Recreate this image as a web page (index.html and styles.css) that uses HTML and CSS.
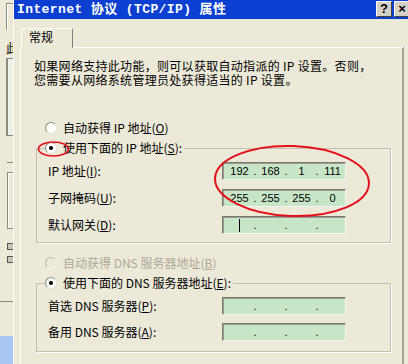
FILE: index.html
```html
<!DOCTYPE html>
<html lang="zh-CN">
<head>
    <meta charset="UTF-8">
    <meta name="viewport" content="width=device-width, initial-scale=1.0">
    <title>Internet 协议 (TCP/IP) 属性</title>
    <link rel="stylesheet" href="styles.css">
</head>
<body>
    <div class="screen">
        <div class="behind">
            <div class="bk-frame"></div>
            <div class="bk-char">此</div>
            <div class="bk-list"></div>
            <div class="bk-tick"></div>
            <div class="bk-box"></div>
            <div class="bk-check"></div>
            <div class="bk-check"></div>
            <div class="bk-rule"></div>
            <div class="bk-sel"></div>
        </div>

        <div class="dialog">
            <div class="titlebar">
                <span class="title">Internet 协议 (TCP/IP) 属性</span>
                <div class="tb-buttons">
                    <span class="tb-btn">?</span>
                    <span class="tb-btn">×</span>
                </div>
            </div>
            <div class="dlg-body">
                <div class="tabs">
                    <div class="tab">常规</div>
                </div>
                <div class="panel">
                    <p class="intro">如果网络支持此功能，则可以获取自动指派的 IP 设置。否则，<br>您需要从网络系统管理员处获得适当的 IP 设置。</p>

                    <div class="radio-row">
                        <span class="radio"></span>
                        <span>自动获得 IP 地址(<u>O</u>)</span>
                    </div>

                    <fieldset class="group">
                        <legend class="legend">
                            <span class="radio checked"></span>
                            <span>使用下面的 IP 地址(<u>S</u>):</span>
                        </legend>
                        <div class="rows">
                            <div class="row">
                                <span class="label">IP 地址(<u>I</u>):</span>
                                <div class="ip">
                                    <span class="seg">192</span><span class="dot">.</span><span class="seg">168</span><span class="dot">.</span><span class="seg">1</span><span class="dot">.</span><span class="seg">111</span>
                                </div>
                            </div>
                            <div class="row">
                                <span class="label">子网掩码(<u>U</u>):</span>
                                <div class="ip">
                                    <span class="seg">255</span><span class="dot">.</span><span class="seg">255</span><span class="dot">.</span><span class="seg">255</span><span class="dot">.</span><span class="seg">0</span>
                                </div>
                            </div>
                            <div class="row">
                                <span class="label">默认网关(<u>D</u>):</span>
                                <div class="ip">
                                    <span class="seg"><span class="caret"></span></span><span class="dot">.</span><span class="seg"></span><span class="dot">.</span><span class="seg"></span><span class="dot">.</span><span class="seg"></span>
                                </div>
                            </div>
                        </div>
                    </fieldset>

                    <div class="radio-row disabled">
                        <span class="radio"></span>
                        <span>自动获得 DNS 服务器地址(<u>B</u>)</span>
                    </div>

                    <fieldset class="group dns">
                        <legend class="legend">
                            <span class="radio checked"></span>
                            <span>使用下面的 DNS 服务器地址(<u>E</u>):</span>
                        </legend>
                        <div class="rows">
                            <div class="row">
                                <span class="label">首选 DNS 服务器(<u>P</u>):</span>
                                <div class="ip">
                                    <span class="seg"></span><span class="dot">.</span><span class="seg"></span><span class="dot">.</span><span class="seg"></span><span class="dot">.</span><span class="seg"></span>
                                </div>
                            </div>
                            <div class="row">
                                <span class="label">备用 DNS 服务器(<u>A</u>):</span>
                                <div class="ip">
                                    <span class="seg"></span><span class="dot">.</span><span class="seg"></span><span class="dot">.</span><span class="seg"></span><span class="dot">.</span><span class="seg"></span>
                                </div>
                            </div>
                        </div>
                    </fieldset>
                </div>
            </div>
        </div>

        <!-- red marks drawn over the screenshot -->
        <svg class="marks" width="408" height="364" viewBox="0 0 408 364">
            <ellipse cx="53.5" cy="149" rx="15" ry="7" fill="none" stroke="#e4101a" stroke-width="1.6"/>
            <ellipse cx="292" cy="181" rx="77" ry="35" fill="none" stroke="#e4101a" stroke-width="2" transform="rotate(2 292 181)"/>
        </svg>
    </div>
</body>
</html>
```

FILE: styles.css
```css
* {
    box-sizing: border-box;
}
html, body {
    margin: 0;
}
body {
    width: 408px;
    height: 364px;
    overflow: hidden;
    background: #ece9d8;
    font-family: "Noto Sans CJK SC", sans-serif;
    font-size: 12px;
    line-height: 14px;
    color: #000;
}
u {
    text-decoration: underline;
    text-underline-offset: 1px;
}
.screen {
    position: relative;
    display: flex;
    width: 408px;
    height: 364px;
    overflow: hidden;
}

/* window behind the dialog */
.behind {
    width: 13px;
    flex: none;
    overflow: hidden;
    display: flex;
    flex-direction: column;
}
.bk-frame {
    margin: 3px 0 0 6px;
    height: 27px;
    border-left: 1px solid #8d8b80;
    border-top: 1px solid #8d8b80;
    box-shadow: inset 1px 1px 0 #fff;
}
.bk-char {
    margin: 11px 0 0 6px;
    white-space: nowrap;
}
.bk-list {
    margin: 3px 0 0 6px;
    height: 78px;
    border: 1px solid #8d8b80;
    border-right: none;
    border-left-width: 2px;
    background: #eef2e6;
}
.bk-tick {
    margin: 26px 0 0 7px;
    height: 1px;
    background: #8d8b80;
}
.bk-box {
    margin: 9px 0 0 7px;
    height: 57px;
    border: 1px solid #8d8b80;
    border-right: none;
    box-shadow: inset 1px 1px 0 #fff;
}
.bk-check {
    margin: 14px 0 0 7px;
    width: 6px;
    height: 7px;
    border: 1px solid #555;
    border-right: none;
    background: #c9c6b8;
}
.bk-check + .bk-check {
    margin-top: 6px;
}
.bk-rule {
    margin-top: 38px;
    height: 1px;
    background: #8d8b80;
}
.bk-sel {
    margin-top: 34px;
    flex: 1;
    background: #a8c6f2;
}

/* dialog */
.dialog {
    flex: 1;
    min-width: 0;
    display: flex;
    flex-direction: column;
    border-left: 1px solid #fff;
}
.titlebar {
    height: 19px;
    flex: none;
    background: #0a3fd2;
    display: flex;
    justify-content: space-between;
    padding-left: 3px;
}
.title {
    color: #fff;
    font: bold 13px/19px "Liberation Mono", "Noto Sans CJK SC", monospace;
    letter-spacing: 0.4px;
    white-space: nowrap;
}
.tb-buttons {
    display: flex;
    gap: 2px;
    margin-right: -2px;
    padding-top: 1px;
}
.tb-btn {
    width: 16px;
    height: 16px;
    background: #d4d0c8;
    border: 1px solid;
    border-color: #fff #404040 #404040 #fff;
    font: bold 13px/14px "Liberation Sans", sans-serif;
    text-align: center;
    color: #000;
}
.dlg-body {
    flex: 1;
    display: flex;
    flex-direction: column;
    padding: 9px 4px 0 6px;
}
.tabs {
    display: flex;
}
.tab {
    position: relative;
    z-index: 1;
    margin: 0 0 -1px 1px;
    width: 52px;
    height: 20px;
    padding: 1px 0 0 7px;
    background: #ece9d8;
    border: 1px solid;
    border-color: #fff #808080 transparent #fff;
    border-bottom: none;
    border-radius: 2px 2px 0 0;
}
.panel {
    flex: 1;
    border-top: 1px solid #fff;
    border-left: 1px solid #fff;
    border-right: 2px solid #a5a397;
    padding: 11px 0 0 13px;
}
.intro {
    margin: 0;
    line-height: 14px;
    letter-spacing: 0.3px;
    white-space: nowrap;
}

/* radios */
.radio-row {
    display: flex;
    align-items: center;
    gap: 6px;
    height: 16px;
    margin: 33px 0 0 11px;
    white-space: nowrap;
}
.radio {
    flex: none;
    width: 12px;
    height: 12px;
    border-radius: 50%;
    border: 1px solid;
    border-color: #8c8a80 #e4e2d8 #e4e2d8 #8c8a80;
    background: #fff;
    display: flex;
    align-items: center;
    justify-content: center;
}
.radio.checked::after {
    content: "";
    width: 4px;
    height: 4px;
    border-radius: 50%;
    background: #000;
}
.disabled {
    color: #aca899;
    margin-top: 12px;
}
.disabled .radio {
    background: #ece9d8;
    border-color: #b8b6ab #f4f3ee #f4f3ee #b8b6ab;
}

/* group boxes */
.group {
    margin: 4px 0 0 2px;
    width: 355px;
    padding: 6px 0 8px 0;
    border: 1px solid #c2bfb0;
    box-shadow: 1px 1px 0 #fff;
}
.group.dns {
    padding-bottom: 10px;
}
.legend {
    display: flex;
    align-items: center;
    gap: 6px;
    height: 16px;
    margin-left: 8px;
    padding: 0 2px 0 0;
    white-space: nowrap;
}
.rows {
    display: flex;
    flex-direction: column;
    gap: 9px;
}
.dns .rows {
    gap: 8px;
}
.row {
    display: flex;
    align-items: center;
    padding-left: 11px;
    height: 18px;
}
.label {
    width: 174px;
    white-space: nowrap;
}

/* ip address fields */
.ip {
    display: flex;
    align-items: center;
    width: 124px;
    height: 18px;
    padding: 0 0 0 4px;
    background: #c7e6c7;
    border: 1px solid;
    border-color: #7a7a72 #f4f4f0 #f4f4f0 #7a7a72;
    box-shadow: inset 1px 1px 0 #9a9a92;
    font: 11px/16px "Liberation Sans", sans-serif;
}
.seg {
    flex: 1;
    text-align: center;
    display: flex;
    justify-content: center;
    align-items: center;
    height: 16px;
}
.dot {
    width: 6px;
    text-align: center;
}
.caret {
    width: 1px;
    height: 13px;
    background: #000;
}

.marks {
    position: absolute;
    left: 0;
    top: 0;
    pointer-events: none;
}
```
